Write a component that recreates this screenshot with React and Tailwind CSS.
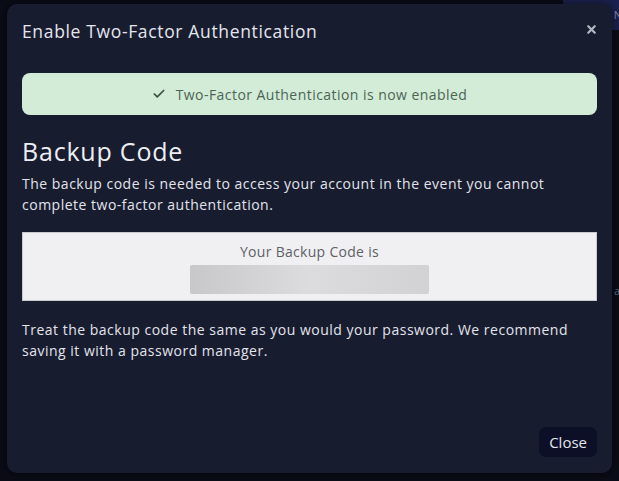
import React from 'react';
import { Check, X } from 'lucide-react';

function App() {
  return (
    <div className="relative h-[481px] w-[619px] overflow-hidden bg-[#0a0c17]" style={{ fontFamily: '"Open Sans", "Noto Sans", sans-serif' }}>
      {/* page behind the overlay */}
      <div className="absolute right-[-40px] top-[-6px] h-[36px] w-[96px] rounded-md bg-[#1c2250]"></div>
      <div className="absolute right-[-3px] top-[9px] text-[11px] leading-none text-[#8a90b8]">N</div>
      <div className="absolute right-[-1px] top-[285px] text-[11px] leading-none text-[#6c7086]">a</div>

      {/* modal */}
      <div className="absolute left-[7px] top-[4px] flex h-[469px] w-[605px] flex-col rounded-[10px] bg-[#181c2f] px-[15px] shadow-[0_0_12px_rgba(0,0,0,0.6)]">
        <div className="flex h-[54px] items-center justify-between pt-[1px]">
          <h1 className="text-[17.5px] tracking-[0.65px] text-[#e4e6ee]">Enable Two-Factor Authentication</h1>
          <X size={13} strokeWidth={4} className="mr-[-1px] mt-[-4px] text-[#b5b8c4]" />
        </div>

        <div className="mt-[15px] flex h-[42px] items-center justify-center gap-[10px] rounded-[8px] bg-[#d2ecd8] text-[14px] tracking-[0.45px] text-[#4d6453]">
          <Check size={14} strokeWidth={3} className="text-[#3b5242]" />
          <span>Two-Factor Authentication is now enabled</span>
        </div>

        <h2 className="mt-[20px] text-[25px] leading-[32px] tracking-[0.8px] text-[#eceef4]">Backup Code</h2>
        <p className="mt-[6px] text-[14px] leading-[21px] tracking-[0.5px] text-[#e2e4ec]">
          The backup code is needed to access your account in the event you cannot complete two-factor authentication.
        </p>

        <div className="mt-[17px] flex h-[69px] flex-col items-center border border-[#c9cad0] bg-[#f0f0f2] pt-[8px]">
          <div className="text-[14px] tracking-[0.3px] text-[#5f6066]">Your Backup Code is</div>
          <div className="mt-[3px] h-[29px] w-[239px] rounded-[2px] bg-gradient-to-r from-[#c8c8ca] via-[#dcdcde] to-[#d2d2d4]"></div>
        </div>

        <p className="mt-[18px] text-[14px] leading-[21px] tracking-[0.5px] text-[#e2e4ec]">
          Treat the backup code the same as you would your password. We recommend saving it with a password manager.
        </p>

        <div className="mt-auto mb-[16px] flex justify-end">
          <button className="h-[30px] rounded-[7px] bg-[#0c0f25] px-[10px] text-[15px] text-[#e4e6ee]">Close</button>
        </div>
      </div>
    </div>
  );
}

export default App;
